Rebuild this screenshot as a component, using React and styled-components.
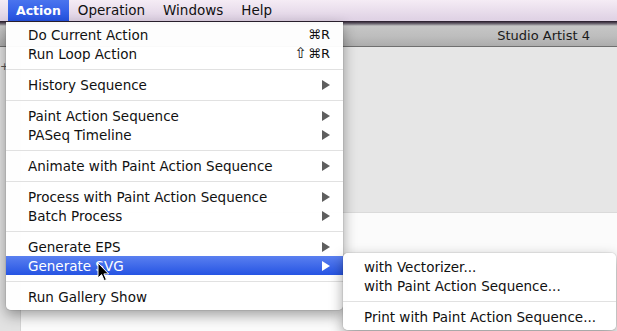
import React from 'react';
import styled, { createGlobalStyle } from 'styled-components';

const Global = createGlobalStyle`
  html, body { margin: 0; padding: 0; overflow: hidden; background: #fff; }
  body { font-family: "DejaVu Sans", "Lucida Grande", sans-serif; }
  * { box-sizing: border-box; }
`;

const Screen = styled.div`
  position: relative;
  width: 617px;
  height: 331px;
  overflow: hidden;
  display: flex;
  flex-direction: column;
  background: #fff;
`;

const MenuBar = styled.div`
  height: 22px;
  flex: none;
  display: flex;
  padding-left: 8px;
  background: linear-gradient(#f5ecf5, #e0d3e5 90%);
  border-bottom: 1px solid #2f2433;
`;

const MenuTitle = styled.div`
  padding: 0 ${p => (p.$active ? 8 : 9)}px;
  height: 21px;
  line-height: 21px;
  font-size: ${p => (p.$active ? '12.5px' : '13.5px')};
  font-weight: ${p => (p.$active ? 700 : 400)};
  color: ${p => (p.$active ? '#fff' : '#111')};
  background: ${p => (p.$active ? 'linear-gradient(#4a74ee, #2452e2)' : 'transparent')};
`;

const Window = styled.div`
  flex: 1;
  display: flex;
  flex-direction: column;
`;

const TitleBar = styled.div`
  height: 25px;
  flex: none;
  display: flex;
  align-items: center;
  justify-content: flex-end;
  padding-right: 27px;
  padding-top: 3px;
  font-size: 13px;
  color: #1a1a1a;
  background: linear-gradient(#3b2f3f 0px, #75707a 2px, #c6c6c6 4px, #bdbdbd 60%, #acacac 100%);
  border-bottom: 1px solid #6f6f6f;
`;

const Body = styled.div`
  flex: 1;
  display: flex;
`;

const SideStrip = styled.div`
  width: 21px;
  flex: none;
  background: #e2e2e2;
  border-right: 1px solid #d4d4d4;
  padding-top: 13px;
  font-size: 11px;
  color: #555;
`;

const Main = styled.div`
  flex: 1;
  display: flex;
  flex-direction: column;
`;

const TopPanel = styled.div`
  height: 166px;
  background: #e6e6e6;
  border-bottom: 1px solid #dadada;
`;

const BottomPanel = styled.div`
  flex: 1;
  background: #fbfbfb;
`;

const Menu = styled.div`
  position: absolute;
  left: 6px;
  top: 22px;
  width: 337px;
  padding: 3px 0 4px;
  background: rgba(255, 255, 255, 0.97);
  border-radius: 0 0 5px 5px;
  box-shadow: 0 5px 14px rgba(0, 0, 0, 0.38), 0 0 0 1px rgba(0, 0, 0, 0.06);
  font-size: 13.5px;
  color: #111;
`;

const SubMenu = styled(Menu)`
  left: 343px;
  top: 253px;
  width: 273px;
  padding-top: 4px;
  border-radius: 5px;
`;

const Item = styled.div`
  height: 19px;
  display: flex;
  align-items: center;
  padding: 0 13px 0 ${p => p.$indent || 22}px;
  white-space: nowrap;
  color: ${p => (p.$selected ? '#fff' : '#111')};
  background: ${p => (p.$selected ? 'linear-gradient(#5a80f0, #2654e3)' : 'transparent')};
`;

const Label = styled.span`
  flex: 1;
`;

const Shortcut = styled.span`
  display: flex;
  align-items: center;
  gap: 1px;
  font-size: 13px;
`;

const ShiftGlyph = styled.span`
  font-size: 15px;
  line-height: 1;
`;

const Separator = styled.div`
  height: 12px;
  display: flex;
  align-items: center;
  &::after {
    content: '';
    flex: 1;
    height: 1px;
    background: #e1e1e1;
  }
`;

const Arrow = ({ light }) => (
  <svg width="8" height="10" viewBox="0 0 8 10" style={{ display: 'block' }}>
    <polygon points="0,0 8,5 0,10" fill={light ? '#ffffff' : '#5e5e5e'} />
  </svg>
);

const Cursor = styled.svg`
  position: absolute;
  left: 97px;
  top: 262px;
`;

const mainItems = [
  { label: 'Do Current Action', sc: '⌘R' },
  { label: 'Run Loop Action', sc: '⌘R', shift: true },
  'sep',
  { label: 'History Sequence', sub: true },
  'sep',
  { label: 'Paint Action Sequence', sub: true },
  { label: 'PASeq Timeline', sub: true },
  'sep',
  { label: 'Animate with Paint Action Sequence', sub: true },
  'sep',
  { label: 'Process with Paint Action Sequence', sub: true },
  { label: 'Batch Process', sub: true },
  'sep',
  { label: 'Generate EPS', sub: true },
  { label: 'Generate SVG', sub: true, selected: true },
  'sep',
  { label: 'Run Gallery Show' },
];

const subItems = [
  { label: 'with Vectorizer...' },
  { label: 'with Paint Action Sequence...' },
  'sep',
  { label: 'Print with Paint Action Sequence...' },
];

export default function App() {
  return (
    <Screen>
      <Global />
      <MenuBar>
        <MenuTitle $active>Action</MenuTitle>
        <MenuTitle>Operation</MenuTitle>
        <MenuTitle>Windows</MenuTitle>
        <MenuTitle>Help</MenuTitle>
      </MenuBar>
      <Window>
        <TitleBar>Studio Artist 4</TitleBar>
        <Body>
          <SideStrip>+</SideStrip>
          <Main>
            <TopPanel />
            <BottomPanel />
          </Main>
        </Body>
      </Window>

      <Menu>
        {mainItems.map((it, i) =>
          it === 'sep' ? (
            <Separator key={i} />
          ) : (
            <Item key={i} $selected={it.selected}>
              <Label>{it.label}</Label>
              {it.sc && (
                <Shortcut>
                  {it.shift && <ShiftGlyph>⇧</ShiftGlyph>}
                  {it.sc}
                </Shortcut>
              )}
              {it.sub && <Arrow light={it.selected} />}
            </Item>
          )
        )}
      </Menu>

      <SubMenu>
        {subItems.map((it, i) =>
          it === 'sep' ? (
            <Separator key={i} />
          ) : (
            <Item key={i} $indent={21}>
              <Label>{it.label}</Label>
            </Item>
          )
        )}
      </SubMenu>

      <Cursor width="13" height="20" viewBox="0 0 13 20">
        <path
          d="M1 1 L1 16 L4.6 12.6 L7.2 18.6 L9.4 17.6 L6.9 11.9 L11.6 11.9 Z"
          fill="#000"
          stroke="#fff"
          strokeWidth="1"
          strokeLinejoin="round"
        />
      </Cursor>
    </Screen>
  );
}
